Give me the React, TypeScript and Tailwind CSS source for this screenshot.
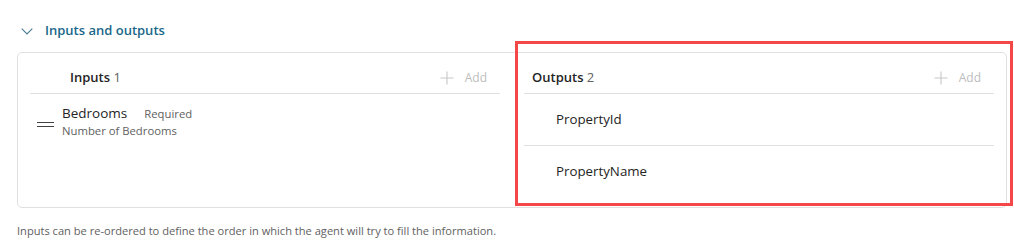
const font = "font-['Segoe_UI','Open_Sans','Noto_Sans',sans-serif]";

const Plus = () => (
  <svg width="14" height="14" viewBox="0 0 14 14" className="shrink-0">
    <path d="M7 0.5V13.5M0.5 7H13.5" stroke="#c8c8c8" strokeWidth="1.1" fill="none" />
  </svg>
);

const AddButton = () => (
  <div className="flex items-center gap-[11px] text-[12px] text-[#bdbdbd]">
    <Plus />
    <span>Add</span>
  </div>
);

const ColumnHeader = ({ label, count, indent }: { label: string; count: number; indent: string }) => (
  <div className={`flex h-[41px] items-center justify-between border-b border-[#e0e0e0] pt-[10px] pr-[13px] ${indent}`}>
    <div className="text-[13px] text-[#242424]">
      <span className="font-semibold">{label}</span> <span className="text-[#616161]">{count}</span>
    </div>
    <AddButton />
  </div>
);

export default function App() {
  const outputs = ["PropertyId", "PropertyName"];

  return (
    <div className={`relative h-[248px] w-[1014px] overflow-hidden bg-white ${font}`}>
      <div className="mt-[21px] flex h-[20px] items-center gap-[12px] pl-[21px]">
        <svg width="12" height="7" viewBox="0 0 12 7">
          <path d="M0.7 0.7L6 6L11.3 0.7" stroke="#4a7a94" strokeWidth="1.1" fill="none" />
        </svg>
        <span className="text-[13px] font-semibold text-[#1a6789]">Inputs and outputs</span>
      </div>

      <div className="mx-[17px] mt-[11px] flex h-[156px] w-[990px] gap-[24px] rounded-[5px] border border-[#e0e0e0] px-[12px]">
        <div className="flex-1">
          <ColumnHeader label="Inputs" count={1} indent="pl-[40px]" />
          <div className="flex items-start pt-[9px]">
            <div className="flex w-[32px] flex-col gap-[3px] pl-[7px] pt-[19px]">
              <div className="h-[1px] w-[17px] bg-[#424242]" />
              <div className="h-[1px] w-[17px] bg-[#424242]" />
            </div>
            <div>
              <div className="flex items-baseline gap-[17px]">
                <span className="text-[13.5px] text-[#242424]">Bedrooms</span>
                <span className="text-[11.3px] text-[#616161]">Required</span>
              </div>
              <div className="text-[11.3px] text-[#616161]">Number of Bedrooms</div>
            </div>
          </div>
        </div>

        <div className="flex-1">
          <ColumnHeader label="Outputs" count={2} indent="pl-[8px]" />
          {outputs.map((o, i) => (
            <div
              key={o}
              className={`flex h-[52px] items-center pl-[32px] text-[13.3px] text-[#242424] ${i < outputs.length - 1 ? "border-b border-[#e0e0e0]" : ""}`}
            >
              {o}
            </div>
          ))}
        </div>
      </div>

      <p className="mt-[15px] pl-[17px] text-[11.1px] leading-[16px] text-[#616161]">
        Inputs can be re-ordered to define the order in which the agent will try to fill the information.
      </p>

      <div className="pointer-events-none absolute left-[515px] top-[41px] h-[165px] w-[498px] border-[3px] border-[#f44848]" />
    </div>
  );
}
